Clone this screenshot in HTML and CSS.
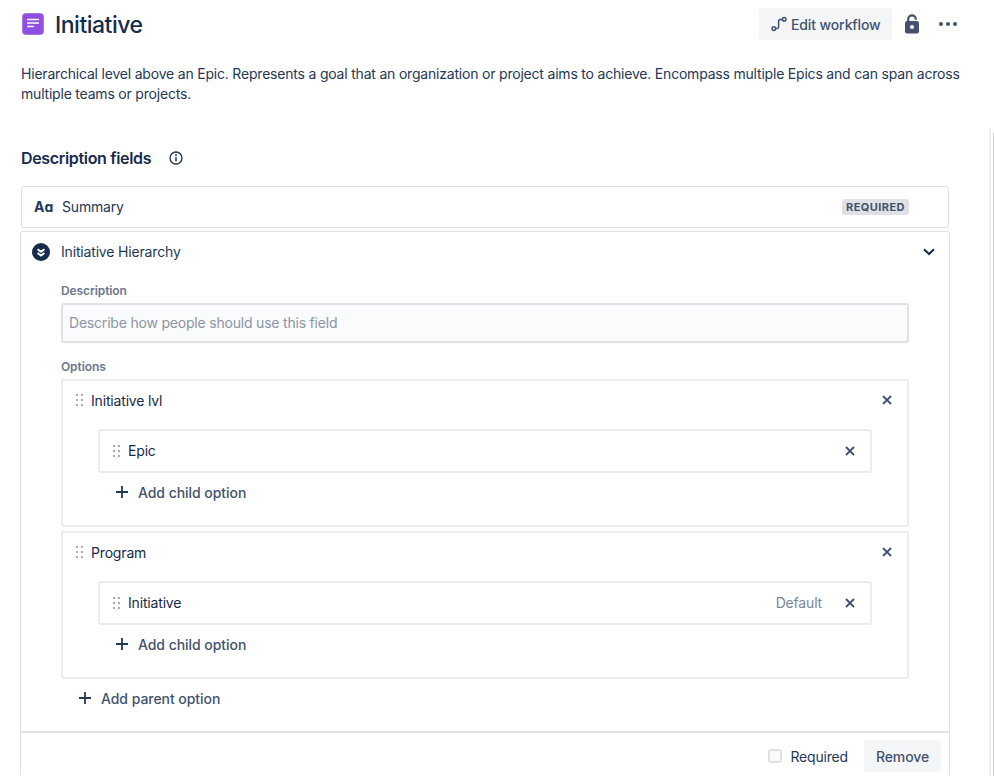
FILE: index.html
```html
<!DOCTYPE html>
<html lang="en">
<head>
<meta charset="utf-8">
<title>Initiative</title>
<link rel="stylesheet" href="styles.css">
</head>
<body>
<div class="page">
  <main class="main">
    <header class="top">
      <div class="title-wrap">
        <svg class="type-icon" width="22" height="22" viewBox="0 0 22 22"><rect x="0.5" y="0.5" width="21" height="21" rx="3" fill="#904ee2" stroke="#a777e8"/><path d="M5 6.5h12M5 10h12M5 13.5h7" stroke="#fff" stroke-width="1.6" fill="none"/></svg>
        <h1 class="title">Initiative</h1>
      </div>
      <div class="actions">
        <button class="btn btn-workflow">
          <svg width="16" height="16" viewBox="0 0 16 16" fill="none" stroke="#42526e" stroke-width="1.5"><circle cx="2.8" cy="12.6" r="1.8"/><circle cx="13.2" cy="3.2" r="1.8"/><path d="M4.6 12.4H6.2C7.2 12.4 7.6 11.8 7.6 11V5.5C7.6 4.4 8.2 3.6 9.3 3.6H11.4" /></svg>
          <span>Edit workflow</span>
        </button>
        <svg class="lock" width="14" height="20" viewBox="0 0 14 20"><path d="M3.2 8V5.2a3.8 3.8 0 0 1 7.6 0v.6" fill="none" stroke="#42526e" stroke-width="2.2"/><rect y="7" width="14" height="12.5" rx="2.2" fill="#42526e"/><circle cx="7" cy="13" r="2" fill="#fff"/></svg>
        <svg class="dots" width="18" height="4" viewBox="0 0 18 4" fill="#42526e"><circle cx="2" cy="2" r="2"/><circle cx="9" cy="2" r="2"/><circle cx="16" cy="2" r="2"/></svg>
      </div>
    </header>

    <p class="intro">Hierarchical level above an Epic. Represents a goal that an organization or project aims to achieve. Encompass multiple Epics and can span across multiple teams or projects.</p>

    <div class="section-head">
      <h2 class="section-title">Description fields</h2>
      <svg width="14" height="14" viewBox="0 0 14 14" fill="none"><circle cx="7" cy="7" r="6" stroke="#253858" stroke-width="1.4"/><path d="M7 6.2v4" stroke="#253858" stroke-width="1.6"/><circle cx="7" cy="4.1" r="1" fill="#253858"/></svg>
    </div>

    <div class="summary">
      <span class="aa">Aɑ</span>
      <span class="field-name">Summary</span>
      <span class="lozenge">REQUIRED</span>
    </div>

    <section class="field">
      <div class="field-head">
        <svg width="18" height="18" viewBox="0 0 18 18"><circle cx="9" cy="9" r="9" fill="#172b4d"/><path d="M5.6 6.2 9 8.8l3.4-2.6M5.6 10 9 12.6l3.4-2.6" fill="none" stroke="#fff" stroke-width="1.9"/></svg>
        <span class="field-name">Initiative Hierarchy</span>
        <svg class="chev" width="12" height="8" viewBox="0 0 12 8"><path d="M1 1.2 6 6l5-4.8" fill="none" stroke="#172b4d" stroke-width="2"/></svg>
      </div>

      <div class="field-body">
        <div class="label">Description</div>
        <div class="input">Describe how people should use this field</div>
        <div class="label label-options">Options</div>

        <div class="parent">
          <div class="row">
            <svg class="grip" width="8" height="12" viewBox="0 0 8 12" fill="#a5adba"><rect width="2" height="2"/><rect x="5" width="2" height="2"/><rect y="5" width="2" height="2"/><rect x="5" y="5" width="2" height="2"/><rect y="10" width="2" height="2"/><rect x="5" y="10" width="2" height="2"/></svg>
            <span class="opt-name">Initiative lvl</span>
            <svg class="x" width="10" height="10" viewBox="0 0 10 10"><path d="M1 1l8 8M9 1l-8 8" stroke="#42526e" stroke-width="1.8"/></svg>
          </div>
          <div class="child">
            <svg class="grip" width="8" height="12" viewBox="0 0 8 12" fill="#a5adba"><rect width="2" height="2"/><rect x="5" width="2" height="2"/><rect y="5" width="2" height="2"/><rect x="5" y="5" width="2" height="2"/><rect y="10" width="2" height="2"/><rect x="5" y="10" width="2" height="2"/></svg>
            <span class="opt-name">Epic</span>
            <svg class="x" width="10" height="10" viewBox="0 0 10 10"><path d="M1 1l8 8M9 1l-8 8" stroke="#42526e" stroke-width="1.8"/></svg>
          </div>
          <div class="add add-child">
            <svg width="12" height="12" viewBox="0 0 12 12"><path d="M6 0v12M0 6h12" stroke="#253858" stroke-width="1.8"/></svg>
            <span>Add child option</span>
          </div>
        </div>

        <div class="parent">
          <div class="row">
            <svg class="grip" width="8" height="12" viewBox="0 0 8 12" fill="#a5adba"><rect width="2" height="2"/><rect x="5" width="2" height="2"/><rect y="5" width="2" height="2"/><rect x="5" y="5" width="2" height="2"/><rect y="10" width="2" height="2"/><rect x="5" y="10" width="2" height="2"/></svg>
            <span class="opt-name">Program</span>
            <svg class="x" width="10" height="10" viewBox="0 0 10 10"><path d="M1 1l8 8M9 1l-8 8" stroke="#42526e" stroke-width="1.8"/></svg>
          </div>
          <div class="child">
            <svg class="grip" width="8" height="12" viewBox="0 0 8 12" fill="#a5adba"><rect width="2" height="2"/><rect x="5" width="2" height="2"/><rect y="5" width="2" height="2"/><rect x="5" y="5" width="2" height="2"/><rect y="10" width="2" height="2"/><rect x="5" y="10" width="2" height="2"/></svg>
            <span class="opt-name">Initiative</span>
            <span class="default">Default</span>
            <svg class="x" width="10" height="10" viewBox="0 0 10 10"><path d="M1 1l8 8M9 1l-8 8" stroke="#42526e" stroke-width="1.8"/></svg>
          </div>
          <div class="add add-child">
            <svg width="12" height="12" viewBox="0 0 12 12"><path d="M6 0v12M0 6h12" stroke="#253858" stroke-width="1.8"/></svg>
            <span>Add child option</span>
          </div>
        </div>

        <div class="add add-parent">
          <svg width="12" height="12" viewBox="0 0 12 12"><path d="M6 0v12M0 6h12" stroke="#253858" stroke-width="1.8"/></svg>
          <span>Add parent option</span>
        </div>
      </div>

      <div class="field-foot">
        <span class="check"></span>
        <span class="field-name">Required</span>
        <button class="btn btn-remove">Remove</button>
      </div>
    </section>
  </main>
  <div class="rail"><div class="thumb"></div></div>
</div>
</body>
</html>
```

FILE: styles.css
```css
* { box-sizing: border-box; }
html, body { margin: 0; padding: 0; background: #fff; }
body { font-family: Inter, "Liberation Sans", sans-serif; color: #172b4d; font-size: 14px; letter-spacing: -0.17px; }
.page { display: flex; width: 994px; height: 776px; overflow: hidden; }
.main { width: 989px; flex: none; padding-left: 21px; }
.rail { display: flex; justify-content: flex-end; width: 5px; margin-top: 128px; border-left: 2px solid #ededed; flex: none; }
.thumb { width: 1px; margin-top: 5px; background: #d4d4d4; }

.top { display: flex; align-items: center; justify-content: space-between; width: 937px; height: 32px; margin-top: 8px; }
.title-wrap { display: flex; align-items: center; gap: 11px; padding-left: 1px; }
.type-icon { flex: none; }
.title { margin: 0; padding-top: 2px; font-size: 23px; font-weight: 500; line-height: 32px; color: #172b4d; letter-spacing: -0.5px; }
.actions { display: flex; align-items: center; }
.btn { font-family: inherit; border: 0; border-radius: 3px; background: #f4f5f7; color: #42526e; font-size: 14px; font-weight: 500; letter-spacing: -0.12px; cursor: pointer; }
.btn-workflow { display: flex; align-items: center; gap: 4px; width: 133px; height: 32px; padding: 0 0 0 12px; }
.lock { margin-left: 13px; flex: none; }
.dots { margin-left: 20px; margin-right: 1px; flex: none; }

.intro { margin: 24px 0 0; width: 950px; font-size: 14px; line-height: 20px; color: #253858; letter-spacing: -0.2px; }

.section-head { display: flex; align-items: center; gap: 18px; height: 24px; margin-top: 42px; }
.section-title { margin: 0; font-size: 16px; font-weight: 600; line-height: 24px; color: #172b4d; letter-spacing: -0.33px; }

.summary { display: flex; align-items: center; width: 928px; height: 42px; margin-top: 16px; padding: 0 39px 1px 12px; border: 1px solid #dfe1e6; border-radius: 3px; }
.aa { width: 28px; font-size: 14px; font-weight: 700; color: #253858; letter-spacing: 0; }
.field-name { font-size: 14px; color: #253858; }
.lozenge { margin-left: auto; padding: 0 4px; height: 16px; line-height: 16px; background: #dfe1e6; border-radius: 3px; color: #42526e; font-size: 11px; font-weight: 700; letter-spacing: 0.45px; }

.field { width: 930px; margin: 3px 0 0 -1px; border: 1px solid #dfe1e6; border-bottom: 0; border-radius: 3px 3px 0 0; }
.field-head { display: flex; align-items: center; height: 39px; padding: 0 14px 0 11px; }
.field-head .field-name { margin-left: 11px; }
.chev { margin-left: auto; }

.field-body { padding: 12px 40px 0 40px; height: 460px; }
.label { font-size: 12px; font-weight: 600; line-height: 16px; color: #6b778c; letter-spacing: -0.1px; }
.label-options { margin-top: 16px; }
.input { height: 40px; margin-top: 4px; padding: 0 6px; border: 2px solid #dfe1e6; border-radius: 3px; background: #fafbfc; color: #8c95a6; font-size: 14px; line-height: 36px; letter-spacing: -0.2px; }

.parent { height: 148px; margin-top: 4px; border: 2px solid #ebecf0; border-radius: 3px; padding: 0 35px; }
.row { display: flex; align-items: center; height: 38px; margin: 0 -20px 0 -22px; }
.grip { flex: none; }
.opt-name { margin-left: 7px; color: #172b4d; font-size: 14px; }
.x { margin-left: auto; flex: none; }
.child { display: flex; align-items: center; height: 44px; margin-top: 10px; padding: 0 15px 0 13px; border: 2px solid #ebecf0; border-radius: 3px; }
.child .opt-name, .default { margin-bottom: 2px; }
.default { margin-left: auto; margin-right: 23px; color: #7a869a; }
.default + .x { margin-left: 0; }
.add { display: flex; align-items: center; font-size: 14px; font-weight: 500; color: #42526e; height: 20px; letter-spacing: -0.05px; }
.add-child { gap: 10px; margin: 9px 0 0 18px; }
.add-parent { gap: 10px; margin: 9px 0 0 18px; }

.field-foot { display: flex; align-items: center; height: 44px; border-top: 2px solid #dfe1e6; padding: 7px 8px 3px 0; justify-content: flex-end; }
.check { width: 14px; height: 14px; border: 2px solid #dfe1e6; border-radius: 3px; background: #fafbfc; margin-right: 8px; }
.btn-remove { width: 77px; height: 32px; margin-left: 16px; padding: 0; }
```
